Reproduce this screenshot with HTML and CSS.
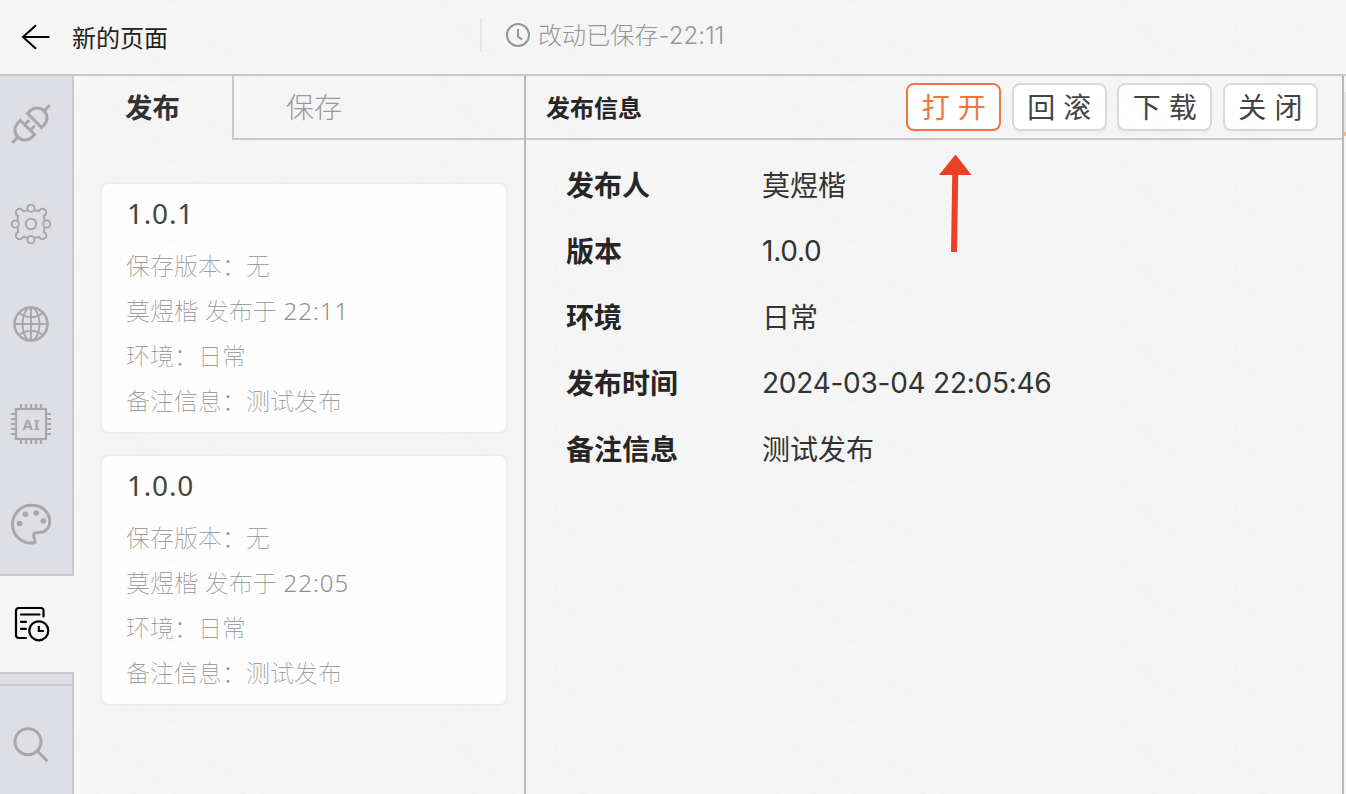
FILE: index.html
```
<!DOCTYPE html>
<html lang="zh-CN">
<head>
<meta charset="utf-8">
<title>新的页面</title>
<link rel="stylesheet" href="styles.css">
</head>
<body>
<div class="app">
  <header class="topbar">
    <svg class="back" width="30" height="28" viewBox="0 0 30 28"><path d="M15 2.200 2 14l13 11.800M2 14h26.500" fill="none" stroke="#000" stroke-width="2"/></svg>
    <h1 class="title">新的页面</h1>
    <div class="saved">
      <svg width="26" height="26" viewBox="0 0 26 26" fill="none" stroke="#959595" stroke-width="2"><circle cx="13" cy="13" r="11"/><path d="M13 7v7.500l4 3"/></svg>
      <span>改动已保存-22:11</span>
    </div>
  </header>
  <div class="main">
    <nav class="rail">
      <div class="rail-top">
        <a class="rail-item"><svg width="44" height="44" viewBox="0 0 44 44" fill="none" stroke="#a8a8a8" stroke-width="3"><g transform="rotate(-45 22 22)"><path d="M-4.500 22h8M40.500 22h8"/><path d="M17 12v20H13.500a10 10 0 0 1 0-20zM27 12v20h3.500a10 10 0 0 0 0-20z"/><path d="M17 18h6.500M17 26h6.500"/></g></svg></a>
        <a class="rail-item"><svg width="44" height="44" viewBox="0 0 44 44" fill="none" stroke="#a8a8a8" stroke-width="2"><circle cx="22" cy="22" r="5.300"/><circle cx="22" cy="6.300" r="3.600"/><circle cx="22" cy="37.700" r="3.600"/><circle cx="6.300" cy="22" r="3.600"/><circle cx="37.700" cy="22" r="3.600"/><path d="M18.500 8.500l-4.600.6a3.700 3.700 0 1 0-4.800 4.800l-.6 4.600M25.500 8.500l4.600.6a3.700 3.700 0 1 1 4.800 4.800l.6 4.600M18.500 35.500l-4.600-.6a3.700 3.700 0 1 1-4.800-4.800l-.6-4.600M25.500 35.500l4.600-.6a3.700 3.700 0 1 0 4.800-4.800l.6-4.600"/></svg></a>
        <a class="rail-item"><svg width="44" height="44" viewBox="0 0 44 44" fill="none" stroke="#a8a8a8" stroke-width="2"><circle cx="22" cy="22" r="16.500" stroke-width="2.600"/><ellipse cx="22" cy="22" rx="8.500" ry="16.500"/><path d="M22 5.500v33M5.500 22h33"/><path d="M10 11q12 8.500 24 0M10 33q12-8.500 24 0"/></svg></a>
        <a class="rail-item"><svg width="44" height="44" viewBox="0 0 44 44" fill="none" stroke="#a8a8a8" stroke-width="2.200"><rect x="7" y="7" width="30" height="30"/><path d="M12 2v4M17 2v4M22 2v4M27 2v4M32 2v4M12 38v4M17 38v4M22 38v4M27 38v4M32 38v4M2 12h4M2 17h4M2 22h4M2 27h4M2 32h4M38 12h4M38 17h4M38 22h4M38 27h4M38 32h4"/><text class="chip-text" x="22.500" y="27.500">AI</text></svg></a>
        <a class="rail-item"><svg width="44" height="44" viewBox="0 0 44 44"><path d="M26 40.500C14 43 3.500 34 3.500 22.500 3.500 11.500 12 3.300 22.500 3.300c10.500 0 18.200 7 18.200 16 0 7.500-5 11.700-11.500 11.200-3.800-.3-5.400 1.500-4.200 5 .8 2.400 1.400 4 1 5z" fill="none" stroke="#a8a8a8" stroke-width="3" stroke-linejoin="round"/><g fill="#a8a8a8"><circle cx="10.500" cy="21.500" r="2.800"/><circle cx="16.500" cy="12.200" r="2.800"/><circle cx="27.300" cy="11" r="2.800"/><circle cx="34.300" cy="19" r="2.800"/></g></svg></a>
      </div>
      <a class="rail-item active"><svg width="44" height="44" viewBox="0 0 44 44" fill="none" stroke="#000" stroke-width="2.200" stroke-linecap="round"><path d="M17 36H10q-3 0-3-3V9q0-3 3-3h22q2.500 0 2.500 2.500v6"/><path d="M12 12.500h18.500M12 19.800h5M12 26.800h5"/><circle cx="29.800" cy="28.800" r="9.500"/><path d="M29.800 24v5h5" stroke-linecap="butt"/></svg></a>
      <div class="rail-bottom">
        <a class="rail-item"><svg width="44" height="44" viewBox="0 0 44 44" fill="none" stroke="#a8a8a8" stroke-width="3"><circle cx="19" cy="18.700" r="13"/><path d="M28.500 28.200l9 9" stroke-linecap="round"/></svg></a>
      </div>
    </nav>
    <section class="versions">
      <div class="tabs"><div class="tab current">发布</div><div class="tab other">保存</div></div>
      <div class="list">
        <article class="card">
          <h2>1.0.1</h2>
          <p>保存版本：无</p>
          <p>莫煜楷 发布于 <span class="num">22:11</span></p>
          <p>环境：日常</p>
          <p>备注信息：测试发布</p>
        </article>
        <article class="card">
          <h2>1.0.0</h2>
          <p>保存版本：无</p>
          <p>莫煜楷 发布于 <span class="num">22:05</span></p>
          <p>环境：日常</p>
          <p>备注信息：测试发布</p>
        </article>
      </div>
    </section>
    <section class="detail">
      <div class="detail-head">
        <h2>发布信息</h2>
        <div class="actions">
          <button class="btn primary">打<i></i>开</button>
          <button class="btn">回<i></i>滚</button>
          <button class="btn">下<i></i>载</button>
          <button class="btn">关<i></i>闭</button>
        </div>
      </div>
      <dl class="info">
        <dt>发布人</dt><dd>莫煜楷</dd>
        <dt>版本</dt><dd class="latin">1.0.0</dd>
        <dt>环境</dt><dd>日常</dd>
        <dt>发布时间</dt><dd class="latin">2024-03-04 22:05:46</dd>
        <dt>备注信息</dt><dd>测试发布</dd>
      </dl>
    </section>
    <aside class="edge"><div class="edge-tab"></div></aside>
  </div>
  <svg class="pointer" width="34" height="100" viewBox="0 0 34 100" fill="#ee4026"><path d="M17.500.5 33.500 21H20.200L19 98H13L14.200 21H1z"/></svg>
  <svg class="watermark" width="1346" height="794" viewBox="0 0 1346 794">
    <defs>
      <g id="mark" transform="rotate(45)"><text x="0" y="0" textLength="274">moyukai05 - 2024/03/04</text><text x="0" y="28" textLength="90">22:11:07</text></g>
      <g id="pair"><use href="#mark"/><use href="#mark" y="80"/></g>
      <g id="quad"><use href="#pair"/><use href="#pair" y="160"/></g>
      <g id="column"><use href="#quad" y="-320"/><use href="#quad"/><use href="#quad" y="320"/><use href="#quad" y="640"/></g>
    </defs>
    <use href="#column" x="87" y="80"/>
    <use href="#column" x="427" y="80"/>
    <use href="#column" x="767" y="80"/>
    <use href="#column" x="1107" y="80"/>
  </svg>
</div>
</body>
</html>
```
FILE: styles.css
```
* { box-sizing: border-box; margin: 0; padding: 0; }
body {
  width: 1346px;
  height: 794px;
  overflow: hidden;
  background: #f5f5f5;
  color: #333;
  font-family: Inter, "Noto Sans CJK SC", sans-serif;
}
.app { position: relative; display: flex; flex-direction: column; height: 794px; }
.topbar {
  display: flex;
  align-items: center;
  height: 76px;
  padding-left: 21px;
  border-bottom: 2px solid #c9c9c9;
}
.title { width: 408px; margin-left: 21px; font-size: 24px; font-weight: 400; line-height: 36px; color: #222; padding-top: 3px; }
.saved {
  display: flex;
  align-items: center;
  gap: 7px;
  height: 34px;
  margin-bottom: 4px;
  padding-left: 23px;
  border-left: 2px solid #e6e6e6;
  font-size: 24px;
  font-weight: 300;
  line-height: 34px;
  color: #979797;
}
.saved span { padding-top: 2px; letter-spacing: .1px; }
.main { display: flex; flex: 1; min-height: 0; }

.rail { display: flex; flex-direction: column; width: 74px; }
.rail-top, .rail-bottom { background: #dedfe4; border-right: 2px solid #c9c9c9; }
.rail-top { flex: none; height: 500px; border-bottom: 2px solid #c9c9c9; }
.rail-item { display: flex; align-items: center; height: 100px; padding-left: 9px; }
.rail-top .rail-item:first-child { height: 96px; margin-bottom: 2px; }
.rail-item.active { flex: none; height: 96px; }
.rail-bottom { flex: 1; min-height: 0; border-top: 2px solid #c9c9c9; padding-top: 10px; }
.rail-bottom .rail-item { height: 120px; border-top: 2px solid #c9c9c9; }
.chip-text { font: 700 15px "Noto Sans", sans-serif; fill: #a8a8a8; stroke: none; text-anchor: middle; letter-spacing: 1px; }

.versions { display: flex; flex-direction: column; width: 452px; border-right: 2px solid #b9b9b9; }
.tabs { display: flex; height: 64px; font-size: 28px; line-height: 64px; }
.tab.current { width: 158px; padding-left: 51px; font-weight: 700; font-size: 27.500px; }
.tab.other { flex: 1; padding-left: 52px; border-left: 2px solid #c9c9c9; border-bottom: 2px solid #c9c9c9; font-weight: 300; color: #999; }
.list { display: flex; flex-direction: column; gap: 20px; padding: 42px 16px 0 26px; }
.card {
  height: 252px;
  padding: 10px 24px;
  background: #fdfdfd;
  border: 2px solid #ededed;
  border-radius: 8px;
  font-size: 24px;
  font-weight: 100;
  line-height: 45px;
  color: #909090;
}
.card h2 { height: 50px; padding-left: 1px; font: 400 28px/39px "Noto Sans", sans-serif; color: #444; letter-spacing: .800px; }
.card p { height: 45px; }
.num { font-family: "Noto Sans", sans-serif; font-weight: 300; line-height: 1; letter-spacing: 1px; }

.detail { display: flex; flex-direction: column; width: 818px; border-right: 2px solid #b9b9b9; }
.detail-head { display: flex; align-items: flex-start; justify-content: space-between; height: 64px; padding: 7px 24px 0 20px; border-bottom: 2px solid #c9c9c9; }
.detail-head h2 { font-size: 24px; line-height: 52px; font-weight: 700; color: #262626; }
.actions { display: flex; gap: 10.300px; }
.btn {
  display: flex;
  align-items: center;
  justify-content: center;
  width: 95.250px;
  height: 48px;
  padding-top: 1px;
  background: #fff;
  border: 2px solid #d9d9d9;
  border-radius: 8px;
  box-shadow: 0 3px 0 rgba(0, 0, 0, .02);
  color: #444;
  font: 400 28px/42px Inter, "Noto Sans CJK SC", sans-serif;
}
.btn i { width: 8px; }
.btn.primary { color: #f07540; border-color: #f07540; }
.info { display: grid; grid-template-columns: 196px 1fr; grid-auto-rows: 66px; padding: 13px 0 0 40px; font-size: 28px; line-height: 66px; }
.info dt { font-weight: 700; color: #262626; }
.info .latin { letter-spacing: -.250px; line-height: 65px; }
.edge { flex: 1; padding-top: 16px; }
.edge-tab { height: 44px; background: #e6e6e6; border-bottom: 4px solid #f7b58e; }

.pointer { position: absolute; left: 938px; top: 154px; }
.watermark { position: absolute; left: 0; top: 0; pointer-events: none; font: 300 24px "Noto Sans", sans-serif; fill: #000; opacity: .013; }
```
